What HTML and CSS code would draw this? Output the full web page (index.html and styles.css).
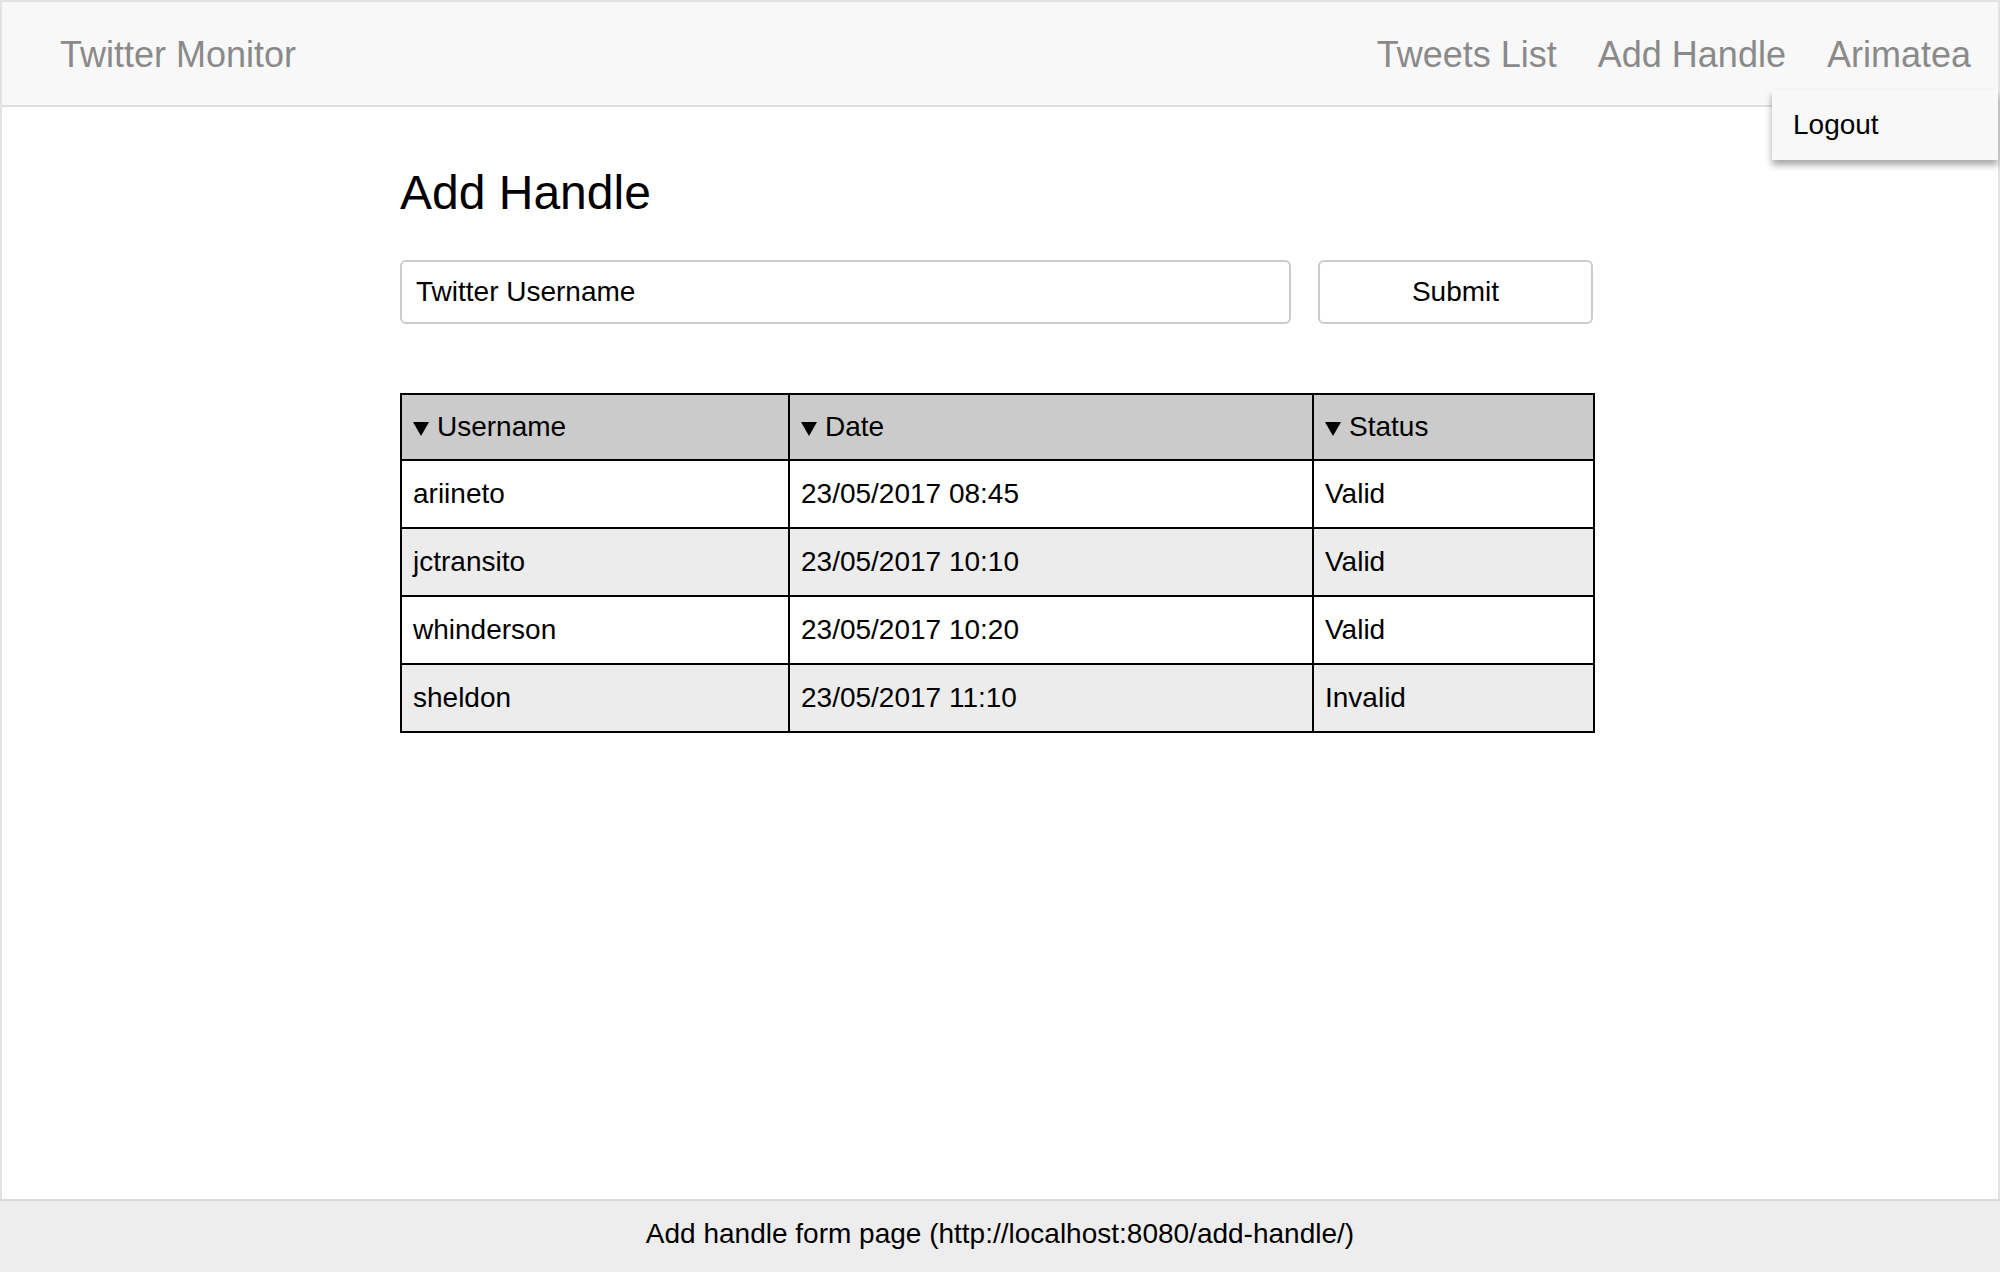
FILE: index.html
```html
<!DOCTYPE html>
<html>
<head>
<meta charset="utf-8">
<title>Twitter Monitor</title>
<link rel="stylesheet" href="styles.css">
</head>
<body>
<div class="page">
  <div class="frame">
    <nav class="navbar">
      <span class="brand">Twitter Monitor</span>
      <div class="nav-links">
        <a class="nav-link">Tweets List</a>
        <a class="nav-link">Add Handle</a>
        <a class="nav-link">Arimatea</a>
      </div>
      <div class="dropdown"><span>Logout</span></div>
    </nav>
    <main class="container">
      <h1 class="title">Add Handle</h1>
      <form class="handle-form">
        <input class="handle-input" type="text" value="Twitter Username">
        <button class="submit-btn" type="button">Submit</button>
      </form>
      <table class="handles">
        <colgroup>
          <col class="c1"><col class="c2"><col class="c3">
        </colgroup>
        <thead>
          <tr>
            <th><svg class="sort" viewBox="0 0 16 14"><path d="M0 0H16L8 14Z"/></svg>Username</th>
            <th><svg class="sort" viewBox="0 0 16 14"><path d="M0 0H16L8 14Z"/></svg>Date</th>
            <th><svg class="sort" viewBox="0 0 16 14"><path d="M0 0H16L8 14Z"/></svg>Status</th>
          </tr>
        </thead>
        <tbody>
          <tr><td>ariineto</td><td>23/05/2017 08:45</td><td>Valid</td></tr>
          <tr><td>jctransito</td><td>23/05/2017 10:10</td><td>Valid</td></tr>
          <tr><td>whinderson</td><td>23/05/2017 10:20</td><td>Valid</td></tr>
          <tr><td>sheldon</td><td>23/05/2017 11:10</td><td>Invalid</td></tr>
        </tbody>
      </table>
    </main>
  </div>
  <footer class="footer">Add handle form page (http://localhost:8080/add-handle/)</footer>
</div>
</body>
</html>
```

FILE: styles.css
```css
html, body {
  margin: 0;
  padding: 0;
}
body {
  font-family: "Liberation Sans", Arial, Helvetica, sans-serif;
  font-size: 28px;
  color: #000;
  background: #fff;
}
.page {
  display: flex;
  flex-direction: column;
  height: 1272px;
}
.frame {
  flex: 1;
  position: relative;
  border: 2px solid #e2e2e2;
  border-bottom: none;
}
.navbar {
  box-sizing: border-box;
  height: 105px;
  display: flex;
  align-items: center;
  padding: 2px 27px 0 58px;
  background: #f8f8f8;
  border-bottom: 2px solid #dedede;
}
.brand {
  font-size: 36px;
  color: #8a8a8a;
}
.nav-links {
  margin-left: auto;
  display: flex;
  gap: 41px;
}
.nav-link {
  font-size: 36px;
  color: #8a8a8a;
}
.dropdown {
  position: absolute;
  top: 88px;
  right: 0;
  width: 205px;
  height: 70px;
  padding-left: 21px;
  display: flex;
  align-items: center;
  background: #f8f8f8;
  box-shadow: 0 5px 7px rgba(0, 0, 0, 0.35);
  font-size: 28px;
}
.container {
  width: 1193px;
  margin-left: 398px;
  padding-top: 58px;
}
.title {
  margin: 0;
  font-size: 48px;
  font-weight: normal;
  line-height: 55px;
}
.handle-form {
  margin: 40px 0 0;
  display: flex;
  gap: 27px;
}
.handle-input {
  flex: 1;
  height: 64px;
  box-sizing: border-box;
  border: 2px solid #cccccc;
  border-radius: 6px;
  padding: 0 14px;
  font-family: inherit;
  font-size: 28px;
  color: #000;
  outline: none;
}
.submit-btn {
  width: 275px;
  height: 64px;
  box-sizing: border-box;
  border: 2px solid #cccccc;
  border-radius: 6px;
  background: #fff;
  font-family: inherit;
  font-size: 28px;
  color: #000;
}
.handles {
  margin-top: 69px;
  width: 1193px;
  border-collapse: collapse;
  table-layout: fixed;
  border: 2px solid #000;
}
.c1 { width: 388px; }
.c2 { width: 524px; }
.c3 { width: 281px; }
.handles th,
.handles td {
  border: 2px solid #000;
  text-align: left;
  padding: 0 0 0 11px;
  font-weight: normal;
  white-space: nowrap;
}
.handles th {
  height: 64px;
  background: #cbcbcb;
}
.handles td {
  height: 66px;
}
.handles tbody tr:nth-child(even) td {
  background: #ececec;
}
.sort {
  width: 16px;
  height: 14px;
  margin-right: 8px;
  vertical-align: 0;
}
.footer {
  box-sizing: border-box;
  height: 73px;
  padding-bottom: 6px;
  display: flex;
  align-items: center;
  justify-content: center;
  background: #ededed;
  border-top: 2px solid #dcdcdc;
  font-size: 28px;
}
```
